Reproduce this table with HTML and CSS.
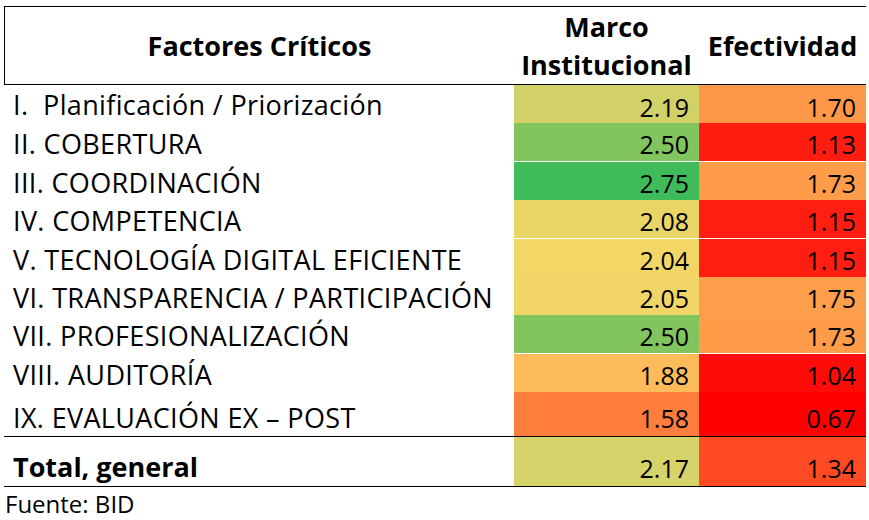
FILE: index.html
```html
<!DOCTYPE html>
<html lang="es">
<head>
<meta charset="utf-8">
<title>Factores Críticos</title>
<link rel="stylesheet" href="styles.css">
</head>
<body>
<div class="sheet">
  <div class="row head">
    <div class="hc">Factores Críticos</div>
    <div class="hc">Marco<br>Institucional</div>
    <div class="hc">Efectividad</div>
  </div>
  <div class="row first"><div class="name">I.&nbsp; Planificación / Priorización</div><div class="num c-219">2.19</div><div class="num e-170">1.70</div></div>
  <div class="row gap"><div class="name">II. COBERTURA</div><div class="num c-250">2.50</div><div class="num e-113">1.13</div></div>
  <div class="row"><div class="name">III. COORDINACIÓN</div><div class="num c-275">2.75</div><div class="num e-173">1.73</div></div>
  <div class="row gap"><div class="name">IV. COMPETENCIA</div><div class="num c-208">2.08</div><div class="num e-115">1.15</div></div>
  <div class="row"><div class="name">V. TECNOLOGÍA DIGITAL EFICIENTE</div><div class="num c-204">2.04</div><div class="num e-115">1.15</div></div>
  <div class="row"><div class="name">VI. TRANSPARENCIA / PARTICIPACIÓN</div><div class="num c-205">2.05</div><div class="num e-175">1.75</div></div>
  <div class="row gap"><div class="name">VII. PROFESIONALIZACIÓN</div><div class="num c-250">2.50</div><div class="num e-173">1.73</div></div>
  <div class="row"><div class="name">VIII. AUDITORÍA</div><div class="num c-188">1.88</div><div class="num e-104">1.04</div></div>
  <div class="row last"><div class="name">IX. EVALUACIÓN EX – POST</div><div class="num c-158">1.58</div><div class="num e-067">0.67</div></div>
  <div class="row total"><div class="name">Total, general</div><div class="num c-217">2.17</div><div class="num e-134">1.34</div></div>
</div>
<p class="source">Fuente: BID</p>
</body>
</html>
```

FILE: styles.css
```css
html, body {
  margin: 0;
  padding: 0;
  background: #fff;
}
body {
  font-family: "Open Sans", "Noto Sans", sans-serif;
  color: #000;
  font-size: 25px;
}
.sheet {
  margin: 6px 0 0 4px;
  width: 862px;
}
.row {
  display: grid;
  grid-template-columns: 510px 185px 167px;
  height: 38px;
}
.row > div {
  display: flex;
  align-items: flex-end;
  line-height: 1;
}
.row.gap {
  height: 39px;
}
.row.gap .num {
  border-bottom: 1px solid #fff;
}
.row.last {
  height: 44px;
  border-bottom: 1px solid #000;
}
.row.total {
  height: 49px;
  border-bottom: 1px solid #000;
}
.head {
  height: 79px;
  border-top: 1px solid #000;
  border-bottom: 1px solid #000;
  border-left: 1px solid #000;
  grid-template-columns: 509px 185px 167px;
  box-sizing: border-box;
}
.row > .hc {
  align-items: center;
  justify-content: center;
  font-weight: 700;
  font-size: 27px;
  text-align: center;
  line-height: 38px;
  padding-top: 1px;
}
.name {
  padding: 0 0 4px 9px;
  font-size: 27px;
  letter-spacing: 0.35px;
  white-space: nowrap;
}
.row.gap .name { padding-bottom: 5px; }
.row.first .name { padding-bottom: 5px; }
.num {
  justify-content: flex-end;
  padding: 0 10px 4px 0;
  box-sizing: border-box;
}
.row.first .num { padding-bottom: 3px; }
.row.gap .num { padding-bottom: 4px; }
.row.last .name, .row.last .num { padding-bottom: 5px; }
.total .name {
  font-weight: 700;
  letter-spacing: 0;
  padding-bottom: 6px;
}
.total .num { padding-bottom: 5px; }

.c-219 { background: #d1d168; }
.c-250 { background: #82c45e; }
.c-275 { background: #40bb59; }
.c-208 { background: #e9d566; }
.c-204 { background: #f2d666; }
.c-205 { background: #f1d566; }
.c-188 { background: #febb5a; }
.c-158 { background: #ff7e3e; }
.c-217 { background: #d5d369; }

.e-170 { background: #fe9848; }
.e-113 { background: #ff1c10; }
.e-173 { background: #ff9c4a; }
.e-115 { background: #ff1e11; }
.e-175 { background: #ff9f4b; }
.e-104 { background: #ff0c08; }
.e-067 { background: #ff0000; }
.e-134 { background: #ff4a23; }

.source {
  margin: 5px 0 0 5px;
  font-size: 24px;
  line-height: 1;
}
```
